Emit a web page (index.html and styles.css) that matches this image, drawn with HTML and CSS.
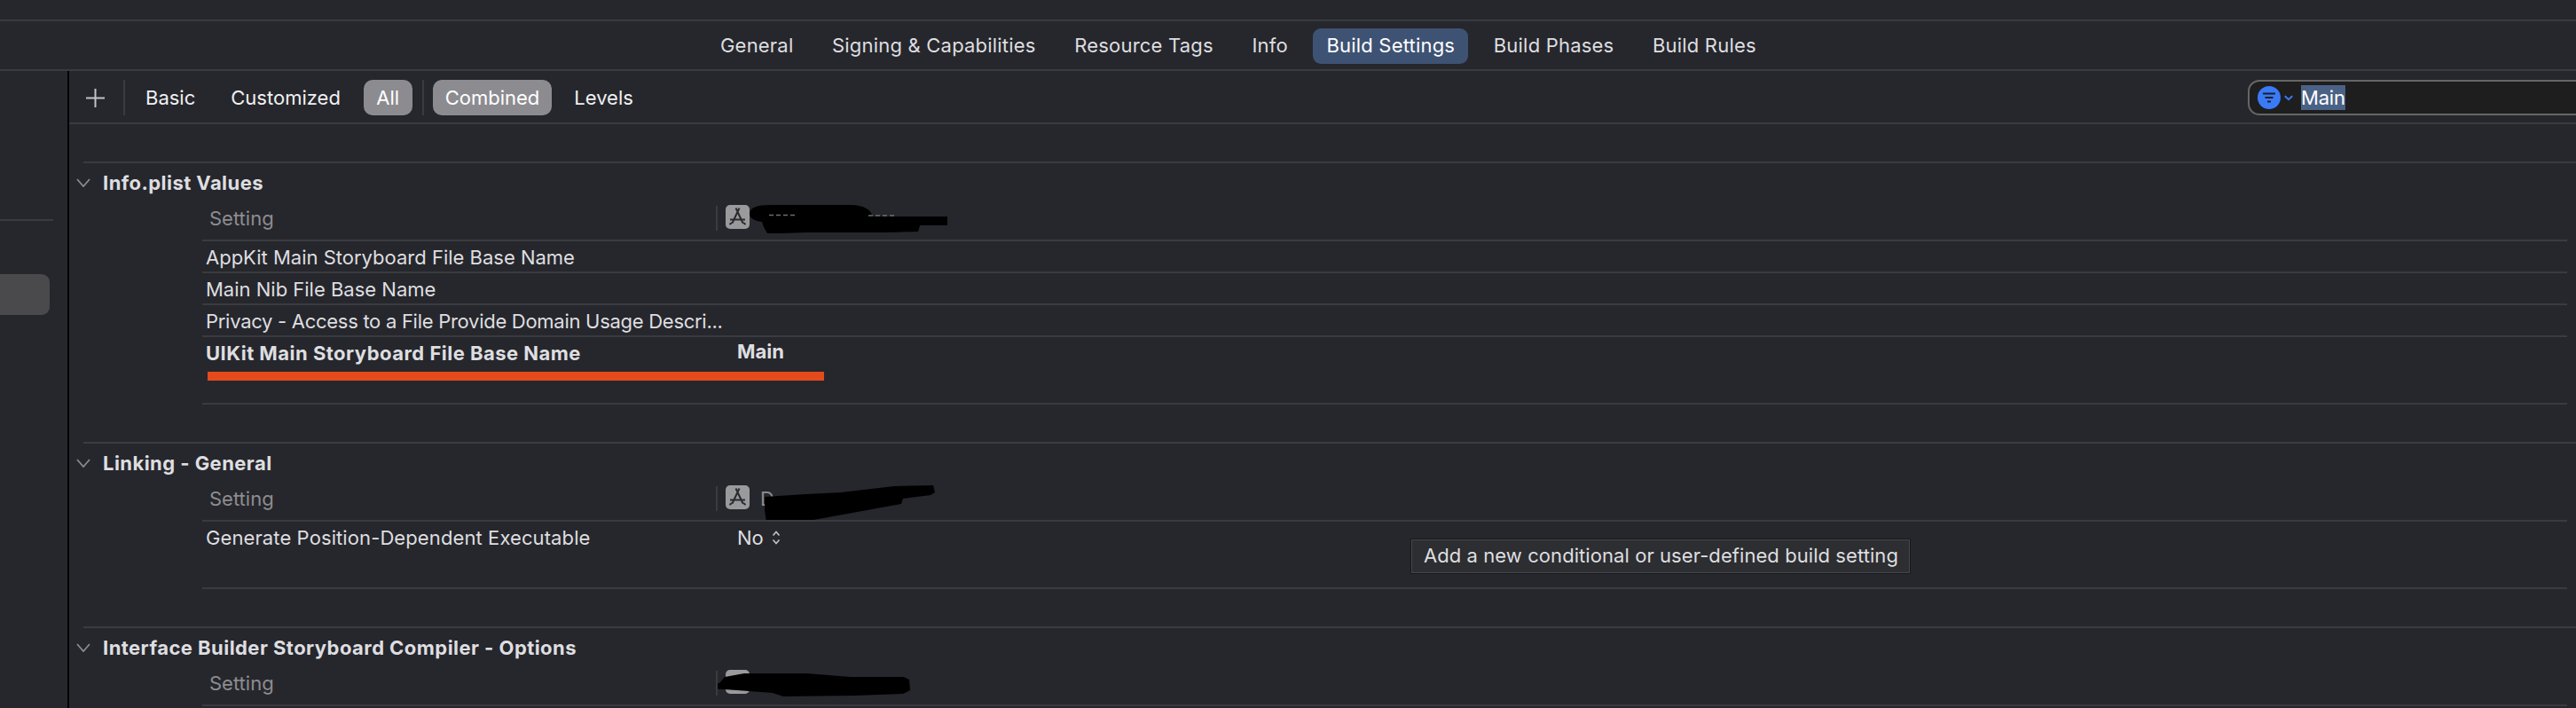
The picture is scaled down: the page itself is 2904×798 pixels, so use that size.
FILE: index.html
```html
<!DOCTYPE html>
<html lang="en">
<head>
<meta charset="utf-8">
<title>Build Settings</title>
<link rel="stylesheet" href="styles.css">
</head>
<body>
<div class="topstrip"></div>
<nav class="tabs">
  <span class="tab">General</span>
  <span class="tab">Signing &amp; Capabilities</span>
  <span class="tab">Resource Tags</span>
  <span class="tab">Info</span>
  <span class="tab tab-active">Build Settings</span>
  <span class="tab">Build Phases</span>
  <span class="tab">Build Rules</span>
</nav>
<div class="main">
  <aside class="sidebar">
    <div class="side-rule"></div>
    <div class="side-item"></div>
  </aside>
  <div class="content">
    <div class="toolbar">
      <svg class="plus" width="21" height="21" viewBox="0 0 21 21"><path d="M10.5 0v21M0 10.5h21" stroke="#c4c4c6" stroke-width="2" fill="none"/></svg>
      <span class="tool-sep"></span>
      <span class="btn">Basic</span>
      <span class="btn">Customized</span>
      <span class="btn btn-on btn-all">All</span>
      <span class="tool-sep tool-sep-b"></span>
      <span class="btn btn-on btn-combined">Combined</span>
      <span class="btn btn-levels">Levels</span>
      <div class="search">
        <svg class="filter" width="26" height="26" viewBox="0 0 26 26"><circle cx="13" cy="13" r="13" fill="#3a7af5"/><path d="M6 8.5h14M8.5 13h9M11 17.500h4" stroke="#1a1f2b" stroke-width="2.200" fill="none"/></svg>
        <svg class="filter-caret" width="10" height="7" viewBox="0 0 10 7"><path d="M.8 1.200 5 5.200l4.200-4" stroke="#3a7af5" stroke-width="2" fill="none"/></svg>
        <span class="search-sel">Main</span>
      </div>
    </div>

    <section class="group group-first">
      <div class="rule"></div>
      <h2 class="title"><svg class="chev" width="16" height="10" viewBox="0 0 16 10"><path d="M1 1l7 8 7-8" stroke="#8b8b8e" stroke-width="1.800" fill="none"/></svg>Info.plist Values</h2>
      <div class="head">
        <span class="head-name">Setting</span>
        <span class="head-value">
          <svg class="appicon" width="27" height="27" viewBox="0 0 27 27"><rect width="27" height="27" rx="5" fill="#9a9a9d"/><path d="M15.500 3.500 7.500 20.500M11.500 3.500l8 17M5 16.500h17M4.500 22l2.500-2M22.500 22 20 20" stroke="#2a2b2f" stroke-width="2" fill="none"/></svg>
          <svg class="scribble" width="270" height="40" viewBox="0 0 270 40"><path d="M36 11C36 4 44 1 60 1h90c15 0 22 5 25 13h84v10h-31l-2 7-36 1H100l-30 1H56l-4-7-2-6c-8-1-14-4-14-9z" fill="#000"/><path d="M58 12.500h32M170 13h32" stroke="#6e6e70" stroke-width="1.500" stroke-dasharray="5 3" fill="none"/></svg>
        </span>
      </div>
      <div class="row"><span class="name">AppKit Main Storyboard File Base Name</span></div>
      <div class="row"><span class="name">Main Nib File Base Name</span></div>
      <div class="row"><span class="name name-tight">Privacy - Access to a File Provide Domain Usage Descri...</span></div>
      <div class="row row-tall">
        <div class="row-line">
          <span class="name name-bold">UIKit Main Storyboard File Base Name</span>
          <span class="value value-bold">Main</span>
        </div>
        <div class="orange"></div>
      </div>
    </section>

    <section class="group">
      <div class="rule"></div>
      <h2 class="title"><svg class="chev" width="16" height="10" viewBox="0 0 16 10"><path d="M1 1l7 8 7-8" stroke="#8b8b8e" stroke-width="1.800" fill="none"/></svg>Linking - General</h2>
      <div class="head">
        <span class="head-name">Setting</span>
        <span class="head-value">
          <svg class="appicon" width="27" height="27" viewBox="0 0 27 27"><rect width="27" height="27" rx="5" fill="#9a9a9d"/><path d="M15.500 3.500 7.500 20.500M11.500 3.500l8 17M5 16.500h17M4.500 22l2.500-2M22.500 22 20 20" stroke="#2a2b2f" stroke-width="2" fill="none"/></svg>
          <span class="target">D</span>
          <svg class="scribble" width="270" height="40" viewBox="0 0 270 40"><path transform="translate(-3 0)" d="M56 14l46-3 40-2 60-7 44-1 2 8-5 3-31 4-2 6-110 20-30 3-12-2-2-14z" fill="#000"/></svg>
        </span>
      </div>
      <div class="row row-generate">
        <div class="row-line">
          <span class="name name-wide">Generate Position-Dependent Executable</span>
          <span class="value">No</span>
          <svg class="updown" width="10" height="16" viewBox="0 0 10 16"><path d="M1.500 5.500 5 1.500l3.500 4M1.500 10.500 5 14.500l3.500-4" stroke="#c4c4c6" stroke-width="1.600" fill="none"/></svg>
        </div>
      </div>
    </section>

    <section class="group">
      <div class="rule"></div>
      <h2 class="title"><svg class="chev" width="16" height="10" viewBox="0 0 16 10"><path d="M1 1l7 8 7-8" stroke="#8b8b8e" stroke-width="1.800" fill="none"/></svg>Interface Builder Storyboard Compiler - Options</h2>
      <div class="head">
        <span class="head-name">Setting</span>
        <span class="head-value">
          <svg class="appicon" width="27" height="27" viewBox="0 0 27 27"><rect width="27" height="27" rx="5" fill="#9a9a9d"/></svg>
          <svg class="scribble" width="270" height="40" viewBox="0 0 270 40"><path transform="translate(-6 0)" d="M8 16 14 9 36 5h70l50 4h60l6 3 1 12-8 4-55 2-80 1-12-4-40-3-28-2-2-6z" fill="#000"/></svg>
        </span>
      </div>
    </section>

    <div class="tooltip">Add a new conditional or user-defined build setting</div>
  </div>
</div>
</body>
</html>
```
FILE: styles.css
```css
* { box-sizing: border-box; }
html, body { margin: 0; height: 798px; overflow: hidden; }
body {
  background: #26272c;
  color: #dedee0;
  font-family: Inter, "Noto Sans", sans-serif;
  font-size: 22px;
  line-height: 28px;
}
.topstrip { height: 24px; border-bottom: 2px solid #3a3b3f; }
.tabs {
  height: 56px;
  padding: 8px 0 0 797px;
  display: flex;
  align-items: flex-start;
  gap: 13.6px;
  border-bottom: 2px solid #3a3b3f;
}
.tab { height: 40px; line-height: 38px; padding: 0 15px; border-radius: 9px; white-space: nowrap; letter-spacing: .2px; }
.tab-active { background: #3e5273; color: #fff; }
.main { display: flex; height: 718px; }
.sidebar {
  width: 78px;
  flex: none;
  border-right: 2px solid #000;
  padding-top: 167px;
}
.side-rule { width: 60px; height: 2px; background: #3a3b3f; }
.side-item { width: 56px; height: 46px; margin-top: 60px; background: #4a4a4c; border-radius: 0 9px 9px 0; }
.content { flex: 1; min-width: 0; position: relative; }
.toolbar {
  height: 60px;
  padding: 10px 0 0 19px;
  display: flex;
  align-items: flex-start;
  border-bottom: 2px solid #3a3b3f;
  color: #f0f0f2;
}
.plus { margin-top: 10px; flex: none; }
.tool-sep { width: 2px; height: 40px; background: #3a3b3f; margin: 0 9px 0 21px; flex: none; }
.tool-sep-b { margin: 0 10px 0 11px; }
.btn { height: 40px; line-height: 40px; padding: 0 14px; margin-right: 12px; border-radius: 10px; white-space: nowrap; }
.btn-on { background: #8c8c90; color: #fff; }
.btn-all { margin-right: 0; padding: 0 14.5px; }
.btn-combined { margin-right: 11px; }
.btn-levels { margin-right: 0; }
.search {
  margin-left: auto;
  width: 400px;
  flex: none;
  margin-right: -30px;
  height: 40px;
  display: flex;
  align-items: center;
  padding-left: 9px;
  background: #1e1e1e;
  border: 2px solid #666;
  border-radius: 13px;
}
.filter { flex: none; }
.filter-caret { flex: none; margin-left: 4px; }
.search-sel { margin-left: 9px; background: #4a6286; color: #fff; height: 28px; line-height: 28px; letter-spacing: -.2px; }
.group-first { margin-top: 42px; }
.rule { margin-left: 16px; height: 2px; background: #3a3b3f; }
.title {
  margin: 0;
  height: 44px;
  padding-left: 8px;
  display: flex;
  align-items: center;
  font-size: 22px;
  font-weight: 700;
  letter-spacing: .45px;
  color: #dedee0;
}
.chev { margin-right: 14px; flex: none; }
.head {
  margin-left: 150px;
  margin-right: 10px;
  height: 44px;
  display: flex;
  align-items: flex-start;
  border-bottom: 2px solid #3a3b3f;
}
.head-name { width: 579px; padding: 4px 0 0 8px; color: #8d8d90; flex: none; }
.head-value {
  position: relative;
  height: 28px;
  margin-top: 4px;
  border-left: 2px solid #3a3b3f;
  padding-left: 9px;
  display: flex;
  align-items: flex-start;
}
.appicon { flex: none; margin-top: -1px; }
.target { margin-left: 12px; color: #8d8d90; }
.scribble { position: absolute; left: 0; top: -2px; }
.row {
  margin-left: 150px;
  margin-right: 10px;
  height: 36px;
  padding-left: 4px;
  border-bottom: 2px solid #3a3b3f;
}
.row-tall { height: 76px; margin-bottom: 42px; }
.row-generate { height: 76px; margin-bottom: 42px; }
.row-line { display: flex; align-items: flex-start; }
.name { display: block; width: 599px; height: 34px; line-height: 36px; flex: none; white-space: nowrap; }
.name-bold { font-weight: 700; letter-spacing: .48px; }
.name-tight { letter-spacing: -.28px; }
.name-wide { letter-spacing: .1px; }
.value { line-height: 36px; }
.value-bold { font-weight: 700; margin-top: -2px; }
.updown { margin: 10px 0 0 9px; flex: none; }
.orange { width: 695px; height: 10px; margin: 5px 0 0 2px; background: #e44b1c; }
.tooltip {
  position: absolute;
  left: 1513px;
  top: 528px;
  width: 562px;
  height: 38px;
  line-height: 34px;
  padding-left: 13px;
  letter-spacing: .07px;
  background: #2d2e31;
  border: 1px solid #46474a;
  outline: 1px solid #17181b;
  white-space: nowrap;
}
```
